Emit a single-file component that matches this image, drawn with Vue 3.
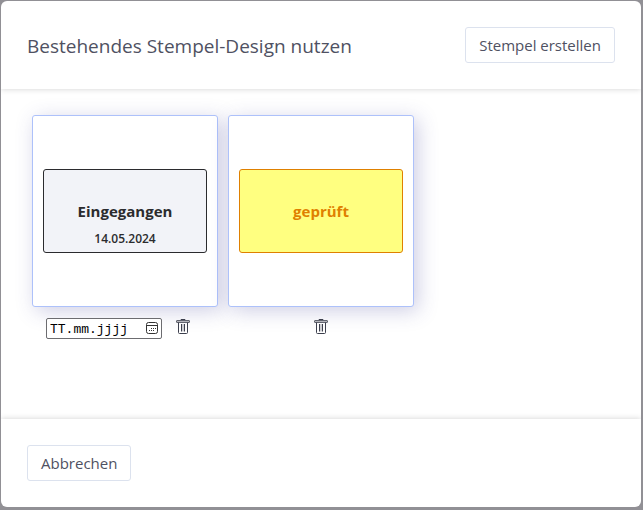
<template>
  <div class="backdrop">
    <div class="modal" role="dialog" aria-labelledby="modal-title">
      <header class="modal-header">
        <h1 id="modal-title">Bestehendes Stempel-Design nutzen</h1>
        <button type="button" class="button">Stempel erstellen</button>
      </header>

      <main class="modal-body">
        <div v-for="stamp in stamps" :key="stamp.id" class="stamp-item">
          <button type="button" class="stamp-card">
            <span class="stamp" :class="stamp.variant">
              <span class="stamp-title">{{ stamp.title }}</span>
              <span class="stamp-date">{{ stamp.date }}</span>
            </span>
          </button>
          <div class="stamp-actions">
            <div v-if="stamp.date" class="date-field">
              <input
                v-model="dates[stamp.id]"
                type="text"
                placeholder="TT.mm.jjjj"
                aria-label="Datum"
              />
              <button type="button" class="icon-button" aria-label="Kalender">
                <svg width="12" height="13" viewBox="0 0 12 13" fill="none" stroke="#333">
                  <rect x="0.5" y="0.5" width="11" height="11" rx="2" />
                  <path d="M1 3.5H11" />
                  <path d="M5 6.5H6M7 6.5H8M9 6.5H10M3 8.5H4M5 8.5H6M7 8.5H8" />
                </svg>
              </button>
            </div>
            <button type="button" class="icon-button delete" aria-label="Löschen" @click="removeStamp(stamp.id)">
              <svg width="14" height="16" viewBox="0 0 14 16" fill="none" stroke="#3c3f4d">
                <path d="M5 1.5V0.5H9V1.5" />
                <rect x="0.5" y="1.5" width="13" height="2" rx="0.5" fill="#b4b5bc" stroke="#62646f" />
                <path d="M2.5 3.5V13.5Q2.5 14.5 3.5 14.5H10.5Q11.5 14.5 11.5 13.5V3.5" />
                <path d="M5.5 5V12.5M8.5 5V12.5" />
                <path d="M7 5V12.5" stroke="#a0a1a8" />
              </svg>
            </button>
          </div>
        </div>
      </main>

      <footer class="modal-footer">
        <button type="button" class="button">Abbrechen</button>
      </footer>
    </div>
  </div>
</template>

<script setup>
import { reactive, ref } from 'vue';

const stamps = ref([
  { id: 1, title: 'Eingegangen', date: '14.05.2024', variant: 'received' },
  { id: 2, title: 'geprüft', date: '', variant: 'checked' },
]);

const dates = reactive({ 1: '' });

const removeStamp = (id) => {
  stamps.value = stamps.value.filter((stamp) => stamp.id !== id);
};
</script>

<style>
body {
  background: #919095;
}
</style>

<style scoped>
.backdrop {
  box-sizing: border-box;
  height: 100vh;
  padding: 1px 2px 3px 1px;
  font-family: "Open Sans", "Noto Sans", sans-serif;
  color: #4f5162;
}

.modal {
  display: flex;
  flex-direction: column;
  height: 100%;
  overflow: hidden;
  border-radius: 6px;
  background: #fff;
}

.modal-header,
.modal-footer {
  display: flex;
  align-items: center;
  justify-content: space-between;
  padding: 26px;
  box-shadow: 0 0 6px rgba(0, 0, 0, 0.18);
}

h1 {
  margin: 0;
  padding-top: 2px;
  font-size: 19px;
  font-weight: 400;
  line-height: 28px;
}

.button {
  height: 36px;
  padding: 0 13px;
  border: 1px solid #dce2ee;
  border-radius: 3px;
  background: #fff;
  color: inherit;
  font: inherit;
  font-size: 15px;
}

.modal-body {
  display: flex;
  flex: 1;
  flex-wrap: wrap;
  align-content: flex-start;
  gap: 10px;
  padding: 26px 31px;
}

.stamp-item {
  width: 186px;
}

.stamp-card {
  display: flex;
  align-items: center;
  width: 100%;
  height: 192px;
  padding: 10px;
  border: 1px solid #adc1fa;
  border-radius: 3px;
  background: #fff;
  box-shadow: 4px 4px 20px rgba(60, 60, 150, 0.25);
  font: inherit;
}

.stamp {
  display: flex;
  flex: 1;
  flex-direction: column;
  box-sizing: border-box;
  height: 84px;
  padding-top: 29px;
  border: 1px solid;
  border-radius: 3px;
  font-weight: 700;
}

.received {
  background: #f2f3f8;
  color: #2b2b2e;
}

.checked {
  background: #ffff80;
  color: #df8000;
}

.stamp-title {
  font-size: 15px;
  line-height: 24px;
}

.stamp-date {
  margin-top: 6px;
  font-size: 12px;
  font-weight: 600;
  line-height: 20px;
}

.stamp-actions {
  display: flex;
  align-items: center;
  justify-content: center;
  height: 21px;
  margin-top: 11px;
}

.date-field {
  display: flex;
  align-items: center;
  box-sizing: border-box;
  width: 116px;
  height: 21px;
  padding: 0 3px;
  border: 1px solid #6c6c70;
  border-radius: 2px;
  background: #fff;
}

input {
  flex: 1;
  min-width: 0;
  padding: 2px 0 0;
  border: 0;
  outline: 0;
  background: transparent;
  color: #000;
  font-family: "Liberation Mono", monospace;
  font-size: 13px;
}

input::placeholder {
  color: #000;
}

.icon-button {
  display: flex;
  padding: 0;
  border: 0;
  background: none;
}

.delete {
  padding: 0 14px 4px;
}
</style>
